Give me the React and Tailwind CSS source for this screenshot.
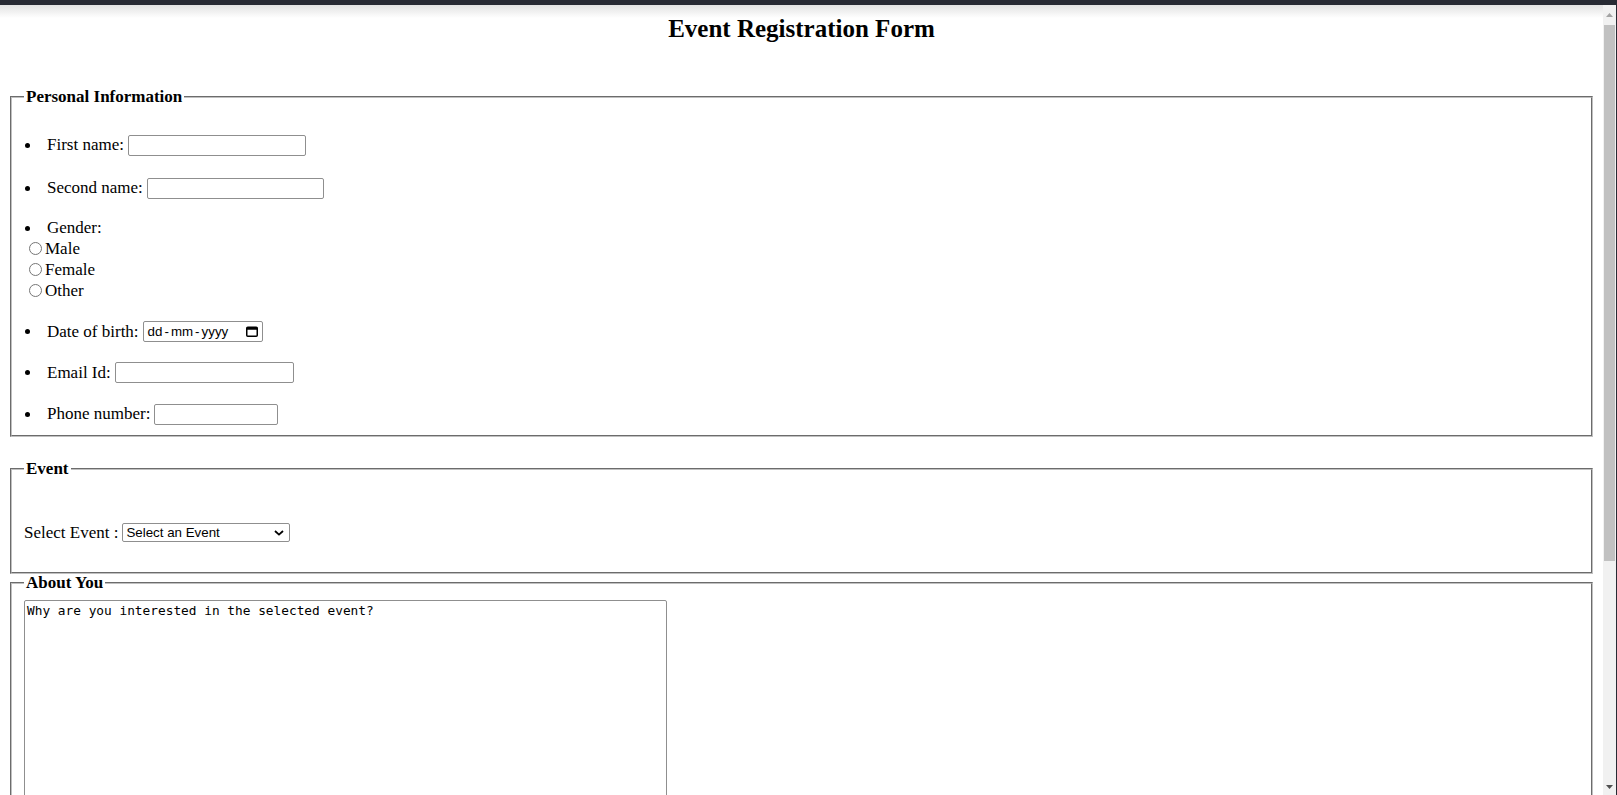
const inputCls =
  "h-[21px] border border-[#8f8f8f] rounded-[2px] bg-white px-[2px] text-[13.33px] font-['Liberation_Sans',sans-serif] outline-none";

function Bullet() {
  return (
    <span className="w-[23px] shrink-0 flex">
      <span className="ml-[1px] w-[5px] h-[5px] rounded-full bg-black" />
    </span>
  );
}

function Row({ label, className = "", children }) {
  return (
    <li className={`flex items-center ${className}`}>
      <Bullet />
      <span className="whitespace-nowrap">{label}</span>
      {children}
    </li>
  );
}

function Radio({ label }) {
  return (
    <label className="flex items-center h-[21px]">
      <input type="radio" name="gender" className="ml-[5px] mr-[3px] w-[13px] h-[13px]" />
      <span>{label}</span>
    </label>
  );
}

function CalendarIcon() {
  return (
    <svg width="12" height="11" viewBox="0 0 12 11" fill="none">
      <rect x="0.75" y="1.25" width="10.5" height="9" rx="1" stroke="#000" strokeWidth="1.5" />
      <rect x="0.75" y="1.25" width="10.5" height="2.5" fill="#000" />
    </svg>
  );
}

const fieldsetCls =
  "mx-[10px] border-2 [border-style:groove] border-[#c0c0c0] px-[12px] min-w-0";
const legendCls = "px-[2px] font-bold text-[17px] leading-[18px]";

export default function App() {
  return (
    <div className="w-[1617px] h-[795px] overflow-hidden flex flex-col bg-white text-black font-['Liberation_Serif',serif] text-[17px]">
      <div className="h-[5px] shrink-0 bg-[#272a33]" />
      <div className="flex flex-1 min-h-0">
        <main className="relative flex-1 min-w-0 overflow-hidden pt-[10px]">
          <div className="absolute inset-x-0 top-0 h-[13px] bg-linear-to-b from-[#e2e2e2] to-white/0 pointer-events-none" />

          <h2 className="text-center text-[25px] leading-[28px] font-bold">
            Event Registration Form
          </h2>

          <fieldset className={`${fieldsetCls} mt-[45px] pt-[28px] pb-[10px]`}>
            <legend className={legendCls}>Personal Information</legend>
            <ul>
              <Row label="First name:" className="h-[22px]">
                <input type="text" className={`${inputCls} ml-[4px] w-[178px]`} />
              </Row>
              <Row label="Second name:" className="h-[22px] mt-[21px]">
                <input type="text" className={`${inputCls} ml-[4px] w-[177px]`} />
              </Row>
              <Row label="Gender:" className="h-[20px] mt-[19px]" />
            </ul>
            <div>
              <Radio label="Male" />
              <Radio label="Female" />
              <Radio label="Other" />
            </div>
            <ul>
              <Row label="Date of birth:" className="h-[21px] mt-[20px]">
                <div className="ml-[4px] w-[120px] h-[21px] border border-[#8f8f8f] rounded-[2px] flex items-center pl-[4px] pr-[4px] text-[13.33px] font-['Liberation_Sans',sans-serif]">
                  <span>dd</span>
                  <span className="mx-[2px]">-</span>
                  <span>mm</span>
                  <span className="mx-[2px]">-</span>
                  <span>yyyy</span>
                  <span className="ml-auto flex">
                    <CalendarIcon />
                  </span>
                </div>
              </Row>
              <Row label="Email Id:" className="h-[21px] mt-[20px]">
                <input type="email" className={`${inputCls} ml-[4px] w-[179px]`} />
              </Row>
              <Row label="Phone number:" className="h-[22px] mt-[20px]">
                <input type="tel" className={`${inputCls} ml-[4px] w-[124px]`} />
              </Row>
            </ul>
          </fieldset>

          <fieldset className={`${fieldsetCls} mt-[23px] pt-[45px] pb-[30px]`}>
            <legend className={legendCls}>Event</legend>
            <div className="flex items-center h-[19px]">
              <span className="whitespace-nowrap">Select Event :</span>
              <div className="relative ml-[4px] w-[168px] h-[19px]">
                <select className="appearance-none block w-full h-full border border-[#8f8f8f] rounded-[2px] bg-white pl-[3px] py-0 leading-[17px] text-[13.33px] font-['Liberation_Sans',sans-serif] outline-none">
                  <option>Select an Event</option>
                  <option>Hackathon</option>
                  <option>Workshop</option>
                  <option>Seminar</option>
                </select>
                <svg
                  className="absolute right-[6px] top-[7px] pointer-events-none"
                  width="10"
                  height="6"
                  viewBox="0 0 10 6"
                  fill="none"
                >
                  <path d="M1 1l4 3.6L9 1" stroke="#000" strokeWidth="1.8" />
                </svg>
              </div>
            </div>
          </fieldset>

          <fieldset className={`${fieldsetCls} pt-[8px] pb-[10px]`}>
            <legend className={legendCls}>About You</legend>
            <textarea
              className="block w-[643px] h-[400px] border border-[#8f8f8f] rounded-[2px] px-[2px] py-[2px] text-[12.8px] leading-[15px] font-['DejaVu_Sans_Mono',monospace] resize-none outline-none"
              defaultValue="Why are you interested in the selected event?"
            />
          </fieldset>
        </main>

        <div className="w-[13px] shrink-0 bg-[#f1f1f1] flex flex-col">
          <div className="h-[20px] flex items-center justify-center">
            <svg width="7" height="4" viewBox="0 0 7 4">
              <path d="M3.5 0L7 4H0z" fill="#a3a3a3" />
            </svg>
          </div>
          <div className="h-[536px] mx-[1px] bg-[#c1c1c1]" />
          <div className="flex-1" />
          <div className="h-[16px] flex items-center justify-center">
            <svg width="7" height="4" viewBox="0 0 7 4">
              <path d="M0 0h7L3.5 4z" fill="#505050" />
            </svg>
          </div>
        </div>
        <div className="w-px shrink-0 bg-[#272a33]" />
      </div>
    </div>
  );
}
